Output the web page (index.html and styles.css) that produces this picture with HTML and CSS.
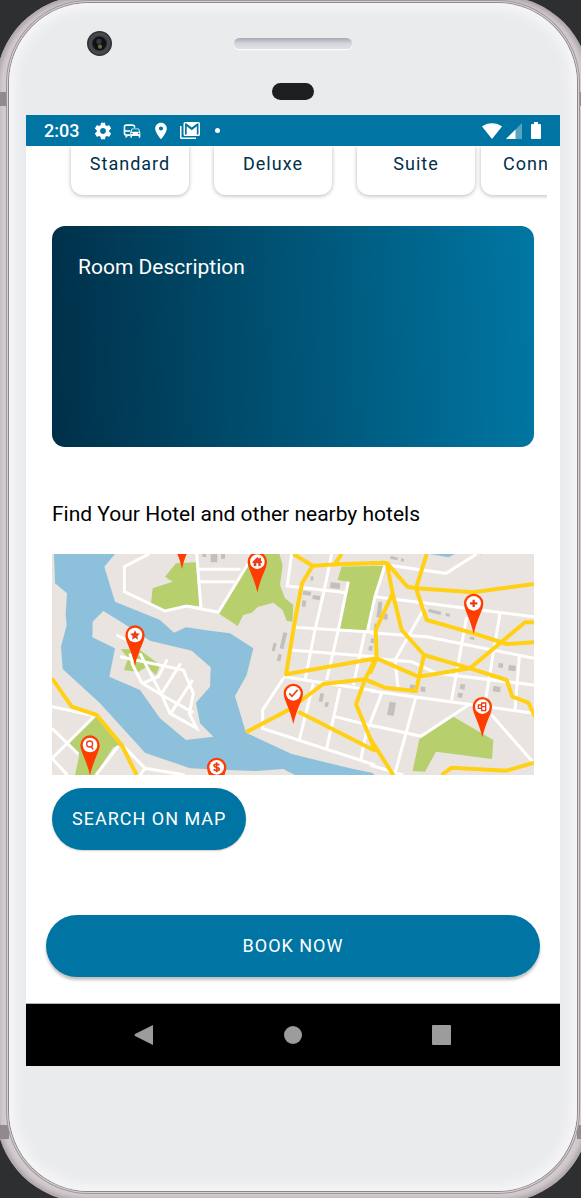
FILE: index.html
```html
<!DOCTYPE html>
<html lang="en">
<head>
<meta charset="utf-8">
<meta name="viewport" content="width=device-width, initial-scale=1">
<title>Hotel booking</title>
<link rel="stylesheet" href="styles.css">
</head>
<body>
<div class="phone">
  <span class="band band-top"></span>
  <span class="band band-left band-upper"></span>
  <span class="band band-right band-upper"></span>
  <span class="band band-left band-lower"></span>
  <span class="band band-right band-lower"></span>
  <div class="face">
    <div class="forehead">
      <div class="sensors">
        <svg class="camera" viewBox="0 0 24 24" aria-hidden="true"><circle cx="12" cy="12" r="12" fill="#303136"/><circle cx="12" cy="12" r="9" fill="none" stroke="#46484e" stroke-width="3"/><circle cx="12" cy="12" r="6.5" fill="#101115"/><circle cx="11.500" cy="10" r="2.500" fill="#343744"/><circle cx="12.500" cy="15" r="2" fill="#6c6a35"/></svg>
        <span class="speaker"></span>
      </div>
      <span class="proximity"></span>
    </div>
    <div class="screen">
      <header class="status">
        <span class="time">2:03</span>
        <svg class="icon" viewBox="0 0 24 24" aria-hidden="true"><path d="M19.430 12.980c.04-.32.07-.64.07-.98s-.03-.66-.07-.98l2.110-1.650c.19-.15.24-.42.12-.64l-2-3.460c-.12-.22-.39-.3-.61-.22l-2.490 1c-.52-.4-1.080-.73-1.690-.98l-.38-2.650C14.460 2.180 14.250 2 14 2h-4c-.25 0-.46.18-.49.42l-.38 2.650c-.61.25-1.170.59-1.690.98l-2.490-1c-.23-.09-.49 0-.61.22l-2 3.460c-.13.22-.07.49.12.64l2.110 1.650c-.04.32-.07.65-.07.98s.03.66.07.98l-2.110 1.650c-.19.15-.24.42-.12.64l2 3.460c.12.22.39.3.61.22l2.490-1c.52.4 1.080.73 1.690.98l.38 2.650c.03.24.24.42.49.42h4c.25 0 .46-.18.49-.42l.38-2.650c.61-.25 1.170-.59 1.690-.98l2.490 1c.23.09.49 0 .61-.22l2-3.460c.12-.22.07-.49-.12-.64l-2.110-1.650zM12 15.500c-1.930 0-3.500-1.570-3.500-3.500s1.570-3.500 3.500-3.500 3.500 1.570 3.500 3.500-1.570 3.500-3.500 3.500z"/></svg>
        <svg class="icon" viewBox="0 0 24 24" aria-hidden="true"><path d="M12 4H5C3.340 4 2 5.340 2 7v8c0 1.660 1.340 3 3 3l-1 1v1h1l2-2h3v-2H5c-.55 0-1-.45-1-1v-2h6v-2H4V6h10v2h2V7c0-1.660-1.340-3-4-3z"/><path fill-rule="evenodd" d="M20.570 9.660c-.14-.4-.52-.66-.97-.66h-7.190c-.46 0-.83.26-.98.660L10 13.770v5.510c0 .38.310.72.690.72h.62c.38 0 .68-.38.68-.76V18h8v1.240c0 .38.310.760.690.760h.61c.38 0 .69-.34.69-.72v-5.510l-1.410-4.110zM12.410 10h7.190l1.030 3h-9.250l1.030-3zM12 16c-.55 0-1-.45-1-1s.45-1 1-1 1 .45 1 1-.45 1-1 1zm8 0c-.55 0-1-.45-1-1s.45-1 1-1 1 .45 1 1-.45 1-1 1z"/></svg>
        <svg class="icon" viewBox="0 0 24 24" aria-hidden="true"><path d="M12 2C8.130 2 5 5.130 5 9c0 5.250 7 13 7 13s7-7.750 7-13c0-3.870-3.130-7-7-7zm0 9.500a2.500 2.500 0 1 1 0-5 2.500 2.500 0 0 1 0 5z"/></svg>
        <svg class="icon" viewBox="0 0 20 20" aria-hidden="true"><path fill-rule="evenodd" d="M5 1h13.500A1.500 1.500 0 0 1 20 2.500v11a1.500 1.500 0 0 1-1.500 1.500H5A1.500 1.500 0 0 1 3.500 13.500v-11A1.500 1.500 0 0 1 5 1zM6.500 2.500l5.250 4 5.250-4h1.500v11h-1.700V5.200l-5.050 4L6.700 5.200v8.300H5v-11z"/><path d="M0 5h1.500v11.500H16V18H1.500A1.500 1.500 0 0 1 0 16.500z"/></svg>
        <span class="dot"></span>
        <span class="system">
          <svg class="wifi" viewBox="0 0 20 16" aria-hidden="true"><path d="M10 16 0 3.500C5-1 15-1 20 3.500z"/></svg>
          <svg class="signal" viewBox="0 0 16 16" aria-hidden="true"><path opacity=".35" d="M16 0v16H0z"/><path d="M9.500 6.500V16H0z"/></svg>
          <svg class="battery" viewBox="0 0 10 17" aria-hidden="true"><path d="M3 0h4v2h2a1 1 0 0 1 1 1v13a1 1 0 0 1-1 1H1a1 1 0 0 1-1-1V3a1 1 0 0 1 1-1h2z"/></svg>
        </span>
      </header>

      <main class="content">
        <div class="rooms">
          <div class="room-group">
            <button class="room" type="button">Standard</button>
            <button class="room" type="button">Deluxe</button>
            <button class="room" type="button">Suite</button>
          </div>
          <button class="room room-next" type="button">Conn</button>
        </div>

        <section class="description"><h2 class="title">Room Description</h2></section>

        <section class="nearby">
          <h2 class="title">Find Your Hotel and other nearby hotels</h2>
          <svg class="map" viewBox="6 12 1446 663" role="img" aria-label="City map with hotel pins">
            <defs>
              <g id="pin"><path fill="#ff3d00" d="M-29 0a29 29 0 1 1 58 0C29 20 10 45 0 92-10 45-29 20-29 0z"/><circle r="22" fill="#fff"/></g>
            </defs>
            <path fill="#e9e4df" d="M6 12h1446v663H6z"/>
            <path fill="#8dc0db" d="M12 12H195L163 50 195 155 330 210 372 248 408 232 480 242 540 250 610 295 590 375 555 438 588 548 725 612 900 655 965 668 975 675H735L700 657 620 663 530 660 420 655 285 608 150 460 38 357 33 290 50 225 47 195 51 130 15 100zM1140 12l55 10 20-10z"/>
            <path fill="#e9e4df" d="M160 183 128 215 127 262 195 295 178 380 270 420 330 505 408 570 490 560 450 520 438 458 480 410 482 352 425 302 300 272 220 220z"/>
            <g fill="#b7cf6c">
              <path d="M378 40 438 37 448 168 408 165 345 183 303 160 308 115 368 95 345 80z"/>
              <path d="M212 297 270 300 330 345 318 375 290 350 265 366 222 360 235 325z"/>
              <path d="M130 500 145 495 215 585 190 592 135 675H75L88 615 55 578z"/>
              <path d="M595 40 605 12H688L698 45 690 105 705 145 730 165 727 215 710 212 698 180 670 158 625 170 605 188 580 195 563 228 505 190z"/>
              <path d="M875 50 1000 47 952 245 867 240 895 95 863 90z"/>
              <path d="M1210 500 1330 570 1326 627 1158 605 1125 665 1088 663 1108 568z"/>
            </g>
            <g fill="none" stroke="#fff" stroke-width="9">
              <path d="M297 12 223 50V125L345 183 410 168 505 187 595 40M440 12 453 172M445 58H572M450 95H555"/>
              <path d="M200 255 230 270M210 320 400 360 430 430 418 490 440 535 360 490 335 435 275 398 248 345 240 310M270 310 335 435 430 488M352 328 325 380 278 400M392 340 332 435M428 390 362 490"/>
              <path d="M6 470 135 497 6 625M6 535 85 612M6 625 52 675M205 588 138 675M222 590 285 655 405 675M285 655 270 675"/>
              <g transform="translate(480 0)"><path d="M245 12 232 108 410 128M365 12 343 120 315 240 285 390M250 232 495 247M415 95 385 240 350 390M465 245 430 405M240 300 495 320M220 380 495 422M220 385 158 480V535L495 645M310 400 268 570M390 415 350 595M375 500 495 530M475 520 452 630"/></g>
              <g transform="translate(960 0)"><path d="M50 45 228 70 320 12M50 30 15 140 -8 245M15 140 492 200M290 200 245 450M165 170 75 330 85 420M0 248 170 260 492 325M390 190 345 460M0 325 125 335 200 370 492 405M448 320 435 480M0 422 290 462 492 490M300 462 150 560M365 495 492 640M35 430 0 520M138 440 75 670M0 525 150 558M0 645 100 675"/></g>
            </g>
            <g fill="#c3bfbb">
              <path d="M457 12h12v9h-12zM482 12h20v25h-20zM513 12h12v14h-12z"/>
              <path d="M782 79h8v13h-8zM842 97l29 3-2 17-29-3zM760 122l24 3-2 12-24-3zM789 135l22 3-2 12-22-3zM758 150l11 2-3 19-11-2zM700 247l12 2-12 49-11-3zM671 278l9 2-6 24-9-2zM685 312l11 2-5 20-11-2zM811 429l11 2-5 25-11-2zM827 455l10 3-4 14-10-3zM964 264l11 2-3 14-11-2zM958 287l11 2-3 14-11-2z"/>
              <g transform="translate(960 0)"><path d="M62 17l22 6-2 8-22-5zM94 25l9 2-2 8-9-2zM25 155h12l-4 49-14-3zM42 190l12 3-2 17-12-3zM14 220l8 2-2 12-9-2zM177 176l37 10-2 9-37-9zM228 189l12 3-2 8-12-3zM301 260l13 2-2 8-14-3zM387 338l13 3-2 14-14-3zM417 344l21 4-2 16-22-3zM371 407l21 4-2 16-22-3zM272 402l14 2-3 15-14-3zM265 428l14 2-3 14-14-3zM121 403l14 3-2 13-15-3zM153 409l14 3-2 15-14-3zM59 455l19 3-7 40-20-4z"/></g>
            </g>
            <g fill="none" stroke="#ffd014" stroke-width="12" stroke-linejoin="round">
              <path d="M6 385 65 470 140 495 215 585 260 675"/>
              <g transform="translate(480 0)"><path d="M250 12 308 47 385 43 530 38M395 12 372 45M308 47 276 100 255 210 228 373 500 325M108 547 235 480 340 402 465 388 495 400M265 485 495 602M495 330 465 388 438 463 495 600"/></g>
              <g transform="translate(960 0)"><path d="M0 40 50 38 68 130 95 240 162 315 300 355 410 390 427 440 475 458 495 500M50 38 112 110 138 115 310 127 492 102M170 12 138 115 170 210 311 250 410 282 492 277M300 355 465 217H492M68 130 17 240 20 325 145 380 300 355M162 315 138 423 45 413 0 395M20 325 0 370M0 330 20 325M0 565 70 675M0 592 20 602M215 675 245 653 410 662 492 638"/></g>
            </g>
            <g transform="translate(255 255)"><use href="#pin"/><path fill="#e8401a" d="M0-15 4-5 15-4 7 3 9 14 0 8-9 14-7 3-15-4-4-5z"/></g>
            <use href="#pin" x="396" y="-35"/>
            <g transform="translate(120 585)"><use href="#pin"/><path fill="none" stroke="#e8401a" stroke-width="5" d="M4 5 9 13"/><circle cx="-1" cy="-3" r="9" fill="none" stroke="#e8401a" stroke-width="4"/></g>
            <g transform="translate(622 35)"><use href="#pin"/><path fill="#e8401a" d="M-15 1 0-14 6-8v-4h5v9l4 4-2 3h-3v9H3V5h-6v8h-8V4h-3z"/></g>
            <g transform="translate(730 430)"><use href="#pin"/><path fill="none" stroke="#e8401a" stroke-width="5" d="M-12 0-4 9 13-11"/></g>
            <g transform="translate(500 652)"><use href="#pin"/><path fill="none" stroke="#e8401a" stroke-width="5" d="M8-6C5-11-8-11-8-5S8-1 8 5-5 12-9 6M0-15v30"/></g>
            <g transform="translate(1271 160)"><use href="#pin"/><path fill="none" stroke="#e8401a" stroke-width="7" d="M-11 0h22M0-11v22"/></g>
            <g transform="translate(1297 470)"><use href="#pin"/><path fill="none" stroke="#e8401a" stroke-width="4" d="M-2-11H10V12H-2zM-2 0h12M-2-5h-10V5h8"/></g>
            <use href="#pin" x="1291" y="-77"/>
          </svg>
          <button class="pill search" type="button">SEARCH ON MAP</button>
        </section>

        <button class="pill book" type="button">BOOK NOW</button>
      </main>

      <nav class="navbar">
        <button class="nav-key" type="button" aria-label="Back"><svg viewBox="0 0 20 22"><path d="M19 1v20L1 12q-1-1 0-2z"/></svg></button>
        <button class="nav-key" type="button" aria-label="Home"><svg viewBox="0 0 20 22"><circle cx="10" cy="11" r="9"/></svg></button>
        <button class="nav-key" type="button" aria-label="Overview"><svg viewBox="0 0 20 22"><rect y="1" width="19" height="20" rx="1"/></svg></button>
      </nav>
    </div>
  </div>
</div>
</body>
</html>
```
FILE: styles.css
```css
* { box-sizing: border-box; }

body {
  margin: 0;
  min-height: 100vh;
  display: flex;
  overflow: hidden;
  background: #2d2f31;
  font-family: Roboto, "Noto Sans", sans-serif;
  color: #000;
}

button {
  margin: 0;
  border: 0;
  font: inherit;
  cursor: pointer;
}

/* Device shell: runs slightly past the window on every side */
.phone {
  position: relative;
  flex: 1;
  min-width: 0;
  display: flex;
  margin: -4px -9px -4px -4px;
  padding: 7px 13px 11px;
  border-radius: 90px;
  background: #d3cccf;
  box-shadow: inset 0 0 5px 3px #aaa1a6;
}

.band { position: absolute; background: #92898e; }
.band-top { top: 0; left: 433px; width: 13px; height: 7px; }
.band-left { left: 0; width: 13px; height: 14px; }
.band-right { right: 0; width: 13px; height: 14px; }
.band-upper { top: 96px; }
.band-lower { bottom: 63px; }

.face {
  position: relative;
  flex: 1;
  min-width: 0;
  display: flex;
  flex-direction: column;
  padding: 0 17px 125px;
  border-radius: 80px;
  background: #eaebed;
  box-shadow: 0 0 0 1px #8d868a, 0 0 0 2px #d8d2d5, 0 0 0 3px #9d969a, inset 0 0 12px 6px #f6f6f8;
}

.forehead {
  display: flex;
  flex-direction: column;
  align-items: center;
  gap: 27px;
  padding: 28px 0 15px;
}

.sensors {
  align-self: stretch;
  display: grid;
  grid-template-columns: 1fr auto 1fr;
  align-items: center;
}

.camera { width: 25px; height: 25px; margin-left: 61px; }

.speaker {
  width: 118px;
  height: 11px;
  border-radius: 6px;
  background: linear-gradient(#a5a9b3, #d3d6dc 50%, #dfe1e5);
  box-shadow: 0 1px 1px #fff;
}

.proximity {
  width: 42px;
  height: 17px;
  border-radius: 9px;
  background: #1e1f23;
}

.screen {
  flex: 1;
  display: flex;
  flex-direction: column;
  background: #fff;
}

.status {
  display: flex;
  align-items: center;
  gap: 9px;
  height: 31px;
  padding: 0 19px 0 18px;
  background: #0074a2;
  color: #fff;
  fill: #fff;
}

.time { width: 40px; font-size: 18px; font-weight: 500; line-height: 31px; }
.icon { width: 20px; height: 20px; }
.dot { width: 5px; height: 5px; margin-left: 6px; border-radius: 50%; background: #fff; }

.system {
  display: flex;
  align-items: center;
  gap: 4px;
  margin-left: auto;
}

.wifi { width: 20px; height: 16px; }
.signal { width: 16px; height: 16px; }
.battery { width: 10px; height: 17px; margin-left: 5px; }

.content {
  flex: 1;
  display: flex;
  flex-direction: column;
  padding-bottom: 25px;
  border-bottom: 1px solid #b5b5b5;
}

.rooms {
  display: flex;
  gap: 6px;
  margin-right: 13px;
  padding: 0 0 6px 45px;
  overflow: hidden;
}

.room-group { flex: none; display: flex; gap: 25px; }

.room {
  flex: none;
  width: 118px;
  padding: 7px 0 20px;
  border-radius: 0 0 12px 12px;
  background: #fff;
  box-shadow: 0 1px 4px rgba(0, 0, 0, 0.28);
  color: #003049;
  font-size: 18px;
  line-height: 22px;
  letter-spacing: 1px;
  text-align: center;
  white-space: nowrap;
}

.room-next { padding-left: 22px; text-align: left; }

.title {
  margin: 0;
  font-size: 21px;
  font-weight: 400;
  line-height: 26px;
}

.description {
  min-height: 221px;
  margin: 25px 26px 0;
  padding: 28px 26px;
  border-radius: 13px;
  background: linear-gradient(88deg, #003049, #0077a3);
  color: #fff;
}

.nearby { padding: 54px 26px 0; }

.map {
  display: block;
  width: 100%;
  height: auto;
  margin-top: 27px;
}

.pill {
  height: 62px;
  border-radius: 31px;
  background: #0074a2;
  color: #fff;
  font-size: 18px;
  line-height: 22px;
  letter-spacing: 1px;
}

.search {
  margin-top: 13px;
  padding: 0 20px;
  box-shadow: 0 1px 2px rgba(0, 0, 0, 0.2);
}

.book {
  margin: 65px 20px 0;
  box-shadow: 0 3px 3px rgba(0, 0, 0, 0.25);
}

.navbar {
  display: flex;
  justify-content: space-around;
  align-items: center;
  height: 62px;
  padding: 0 44px;
  background: #000;
}

.nav-key {
  display: flex;
  padding: 0;
  background: none;
}

.nav-key svg { width: 20px; height: 22px; fill: #9c9c9c; }
```
